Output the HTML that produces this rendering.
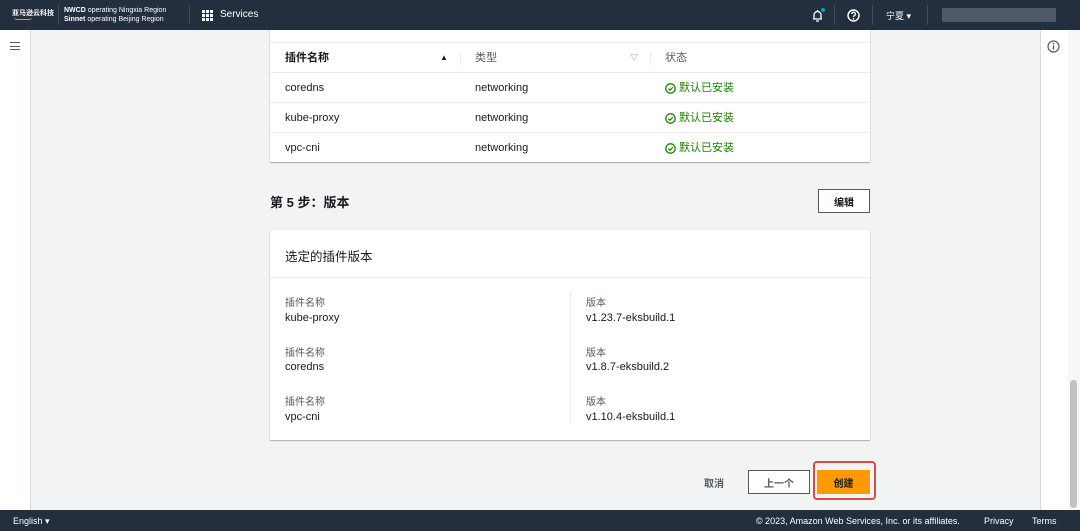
<!DOCTYPE html>
<html><head><meta charset="utf-8"><style>
*{box-sizing:border-box;margin:0;padding:0}
body{width:1080px;height:531px;overflow:hidden;background:#f2f3f3;font-family:"Liberation Sans","Noto Sans CJK SC",sans-serif;font-size:11px;color:#16191f;position:relative}
.top{position:absolute;left:0;top:0;width:1080px;height:30px;background:#232f3e;color:#fff;z-index:10}
.foot{position:absolute;left:0;top:510px;width:1080px;height:21px;background:#232f3e;color:#fff;font-size:9px;z-index:10}
.abs{position:absolute}
.nav{position:absolute;left:0;top:30px;width:31px;height:480px;background:#fff;border-right:1px solid #d5dbdb}
.rp{position:absolute;left:1040px;top:30px;width:28px;height:480px;background:#fff;border-left:1px solid #d5dbdb}
.sb{position:absolute;left:1068px;top:30px;width:12px;height:480px;background:#f7f7f7}
.card{position:absolute;background:#fff;box-shadow:0 1px 1px rgba(0,22,44,.3),0 0 0 1px #eaeded}
.row{position:absolute;left:0;width:600px;height:30px;border-top:1px solid #eaeded;line-height:30px}
.g{color:#1d8102;display:flex;align-items:center;gap:3px;height:30px}
.lbl{color:#545b64;font-size:10px}
.btn{position:absolute;border:1px solid #545b64;background:#fff;display:flex;align-items:center;justify-content:center;font-weight:bold;font-size:10px}
</style></head><body>
<div class="top">
 <div class="abs" style="left:12px;top:8px;font-size:7px;font-weight:bold">亚马逊云科技</div>
 <div class="abs" style="left:14px;top:17px;width:18px;height:3px;border-bottom:1px solid #f90;border-radius:0 0 10px 10px"></div>
 <div class="abs" style="left:58px;top:5px;width:1px;height:20px;background:#414d5c"></div>
 <div class="abs" style="left:64px;top:6px;font-size:7px;line-height:9px"><b>NWCD</b> operating Ningxia Region<br><b>Sinnet</b> operating Beijing Region</div>
 <div class="abs" style="left:189px;top:6px;width:1px;height:18px;background:#414d5c"></div>
 <svg class="abs" style="left:202px;top:10px" width="11" height="11"><g fill="#fff"><rect x="0" y="0" width="3" height="3"/><rect x="4" y="0" width="3" height="3"/><rect x="8" y="0" width="3" height="3"/><rect x="0" y="4" width="3" height="3"/><rect x="4" y="4" width="3" height="3"/><rect x="8" y="4" width="3" height="3"/><rect x="0" y="8" width="3" height="3"/><rect x="4" y="8" width="3" height="3"/><rect x="8" y="8" width="3" height="3"/></g></svg>
 <div class="abs" style="left:220px;top:9px;font-size:10px">Services</div>
 <svg class="abs" style="left:811px;top:8px" width="14" height="14"><path d="M2 11h9M3 11V7a3.5 3.5 0 0 1 7 0v4M6.5 2v1.5M5 13h3" stroke="#fff" stroke-width="1.3" fill="none"/><circle cx="12" cy="2" r="2" fill="#00a1c9"/></svg>
 <div class="abs" style="left:834px;top:5px;width:1px;height:20px;background:#414d5c"></div>
 <svg class="abs" style="left:847px;top:9px" width="13" height="13"><circle cx="6.5" cy="6.5" r="5.5" stroke="#fff" stroke-width="1.4" fill="none"/><path d="M4.7 5a1.8 1.8 0 1 1 2.4 1.7c-.6.3-.6.7-.6 1.3" stroke="#fff" stroke-width="1.3" fill="none"/><circle cx="6.5" cy="9.8" r=".8" fill="#fff"/></svg>
 <div class="abs" style="left:872px;top:5px;width:1px;height:20px;background:#414d5c"></div>
 <div class="abs" style="left:886px;top:9px;font-size:9px">宁夏 ▾</div>
 <div class="abs" style="left:927px;top:5px;width:1px;height:20px;background:#414d5c"></div>
 <div class="abs" style="left:942px;top:8px;width:114px;height:14px;background:#5a6370;opacity:.8"></div>
</div>
<div class="nav"><div class="abs" style="left:10px;top:12px;width:10px;height:8px;border-top:1px solid #545b64;border-bottom:1px solid #545b64"></div><div class="abs" style="left:10px;top:15.5px;width:10px;height:1px;background:#545b64"></div></div>
<div class="rp"><svg class="abs" style="left:6px;top:10px" width="13" height="13"><circle cx="6.5" cy="6.5" r="5.5" stroke="#545b64" stroke-width="1.2" fill="none"/><rect x="5.8" y="5.5" width="1.4" height="4" fill="#545b64"/><circle cx="6.5" cy="3.8" r=".9" fill="#545b64"/></svg></div>
<div class="sb"><div class="abs" style="left:2px;top:350px;width:7px;height:128px;background:#c1c1c1;border-radius:4px"></div></div>

<div class="card" style="left:270px;top:20px;width:600px;height:142px">
 <div class="row" style="top:22px;border-top:1px solid #eaeded;font-weight:bold">
  <span class="abs" style="left:15px">插件名称</span><span class="abs" style="left:170px;font-size:8px">▲</span>
  <span class="abs" style="left:190px;top:8px;width:1px;height:14px;background:#eaeded"></span>
  <span class="abs" style="left:205px;font-weight:normal;color:#545b64">类型</span><span class="abs" style="left:360px;font-size:8px;color:#879596">▽</span>
  <span class="abs" style="left:380px;top:8px;width:1px;height:14px;background:#eaeded"></span>
  <span class="abs" style="left:395px;font-weight:normal;color:#545b64">状态</span>
 </div>
 <div class="row" style="top:52px"><span class="abs" style="left:15px">coredns</span><span class="abs" style="left:205px">networking</span><span class="abs g" style="left:395px"><svg width="11" height="11"><circle cx="5.5" cy="5.5" r="4.7" stroke="#1d8102" stroke-width="1.3" fill="none"/><path d="M3.3 5.6l1.6 1.6 3-3" stroke="#1d8102" stroke-width="1.3" fill="none"/></svg>默认已安装</span></div>
 <div class="row" style="top:82px"><span class="abs" style="left:15px">kube-proxy</span><span class="abs" style="left:205px">networking</span><span class="abs g" style="left:395px"><svg width="11" height="11"><circle cx="5.5" cy="5.5" r="4.7" stroke="#1d8102" stroke-width="1.3" fill="none"/><path d="M3.3 5.6l1.6 1.6 3-3" stroke="#1d8102" stroke-width="1.3" fill="none"/></svg>默认已安装</span></div>
 <div class="row" style="top:112px"><span class="abs" style="left:15px">vpc-cni</span><span class="abs" style="left:205px">networking</span><span class="abs g" style="left:395px"><svg width="11" height="11"><circle cx="5.5" cy="5.5" r="4.7" stroke="#1d8102" stroke-width="1.3" fill="none"/><path d="M3.3 5.6l1.6 1.6 3-3" stroke="#1d8102" stroke-width="1.3" fill="none"/></svg>默认已安装</span></div>
</div>

<div class="abs" style="left:270px;top:192px;font-size:13px;font-weight:bold">第 5 步：版本</div>
<div class="btn" style="left:818px;top:189px;width:52px;height:24px">编辑</div>

<div class="card" style="left:270px;top:230px;width:600px;height:210px">
 <div class="abs" style="left:15px;top:16px;font-size:12.5px">选定的插件版本</div>
 <div class="abs" style="left:0;top:47px;width:600px;height:1px;background:#eaeded"></div>
 <div class="abs" style="left:300px;top:62px;width:1px;height:132px;background:#eaeded"></div>
 <div class="abs lbl" style="left:15px;top:64px">插件名称</div><div class="abs" style="left:15px;top:82px">kube-proxy</div>
 <div class="abs lbl" style="left:316px;top:64px">版本</div><div class="abs" style="left:316px;top:82px">v1.23.7-eksbuild.1</div>
 <div class="abs lbl" style="left:15px;top:114px">插件名称</div><div class="abs" style="left:15px;top:131px">coredns</div>
 <div class="abs lbl" style="left:316px;top:114px">版本</div><div class="abs" style="left:316px;top:131px">v1.8.7-eksbuild.2</div>
 <div class="abs lbl" style="left:15px;top:163px">插件名称</div><div class="abs" style="left:15px;top:181px">vpc-cni</div>
 <div class="abs lbl" style="left:316px;top:163px">版本</div><div class="abs" style="left:316px;top:181px">v1.10.4-eksbuild.1</div>
</div>

<div class="abs" style="left:704px;top:475px;font-size:10px;font-weight:bold;color:#545b64">取消</div>
<div class="btn" style="left:748px;top:470px;width:62px;height:24px;color:#545b64">上一个</div>
<div class="abs" style="left:813px;top:461px;width:63px;height:39px;border:2px solid #e0474b;border-radius:4px"></div>
<div class="btn" style="left:817px;top:470px;width:53px;height:24px;background:#ff9900;border:none;color:#16191f">创建</div>

<div class="foot">
 <div class="abs" style="left:13px;top:6px">English ▾</div>
 <div class="abs" style="left:756px;top:6px">© 2023, Amazon Web Services, Inc. or its affiliates.</div>
 <div class="abs" style="left:984px;top:6px">Privacy</div>
 <div class="abs" style="left:1032px;top:6px">Terms</div>
</div>
</body></html>
